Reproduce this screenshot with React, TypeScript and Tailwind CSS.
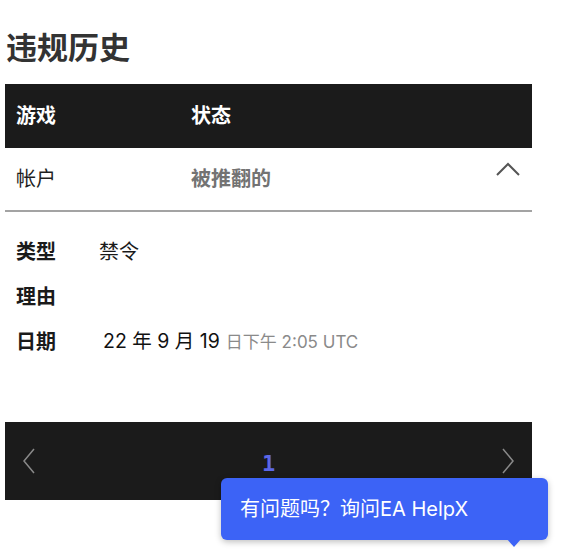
import React from "react";

const font = { fontFamily: "Inter, 'Noto Sans CJK SC', sans-serif" };

export default function App() {
  return (
    <div className="relative w-[565px] h-[550px] bg-white overflow-hidden" style={font}>
      <div className="px-[5px]">
        <h1 className="pt-[27px] pl-[1px] text-[31px] leading-[42px] font-bold text-[#333333]">违规历史</h1>
        <div className="mt-[15px] w-[527px] h-[64px] bg-[#1b1b1b] flex items-center text-white text-[20px] font-bold">
          <div className="pl-[11px] w-[186px]">游戏</div>
          <div>状态</div>
        </div>
        <div className="w-[527px] h-[64px] flex items-center border-b-[2px] border-[#a3a3a3] text-[20px]">
          <div className="pl-[11px] w-[186px] text-[#1f1f1f]">帐户</div>
          <div className="flex-1 font-bold text-[#737373]">被推翻的</div>
          <svg width="26" height="16" viewBox="0 0 26 16" className="mr-[11px] mb-[20px]">
            <path d="M2 14 L13 3 L24 14" fill="none" stroke="#555" strokeWidth="2" />
          </svg>
        </div>
        <div className="pt-[17px] pl-[11px] text-[20px] text-[#1a1a1a]">
          <div className="flex items-center h-[45px]">
            <div className="w-[83px] font-bold">类型</div>
            <div>禁令</div>
          </div>
          <div className="flex items-center h-[45px]">
            <div className="w-[83px] font-bold">理由</div>
          </div>
          <div className="flex items-center h-[45px]">
            <div className="w-[87px] font-bold">日期</div>
            <div className="flex items-baseline">
              <span className="text-[19.5px] text-[#111]">22 年 9 月 19</span>
              <span className="ml-[6px] text-[17px] text-[#8a8a8a]">日下午 2:05 UTC</span>
            </div>
          </div>
        </div>
        <div className="mt-[58px] w-[527px] h-[78px] bg-[#1b1b1b] flex items-center justify-between px-[17px]">
          <svg width="14" height="26" viewBox="0 0 14 26">
            <path d="M12 1 L2 13 L12 25" fill="none" stroke="#8a8a8a" strokeWidth="1.5" />
          </svg>
          <span className="mt-[4px] text-[22px] font-bold text-[#5b67e8]" style={{ fontFamily: "'DejaVu Sans Mono', monospace" }}>1</span>
          <svg width="14" height="26" viewBox="0 0 14 26">
            <path d="M2 1 L12 13 L2 25" fill="none" stroke="#8a8a8a" strokeWidth="1.5" />
          </svg>
        </div>
      </div>
      <div className="absolute left-[221px] top-[478px] w-[327px] h-[62px] rounded-[6px] bg-[#3c63f6] shadow-[0_2px_6px_rgba(0,0,0,0.25)] flex items-center pl-[19px] text-white text-[20px]">
        有问题吗？询问EA HelpX
        <div className="absolute left-[285px] top-[60px] w-0 h-0 border-l-[8px] border-r-[8px] border-t-[9px] border-l-transparent border-r-transparent border-t-[#3c63f6]" />
      </div>
    </div>
  );
}
